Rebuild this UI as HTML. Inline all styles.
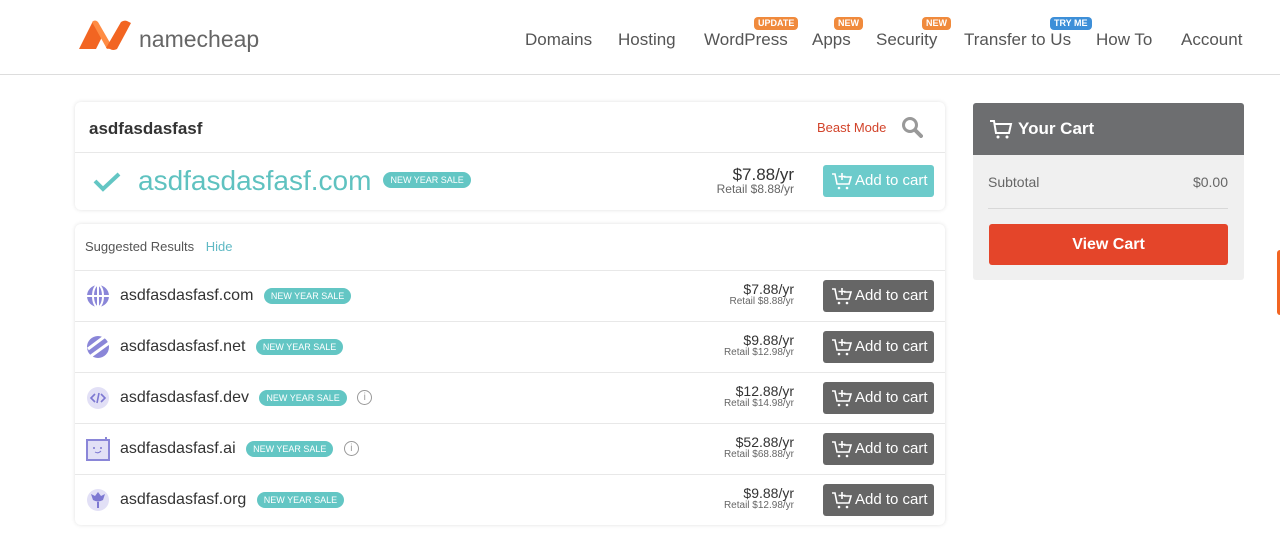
<!DOCTYPE html>
<html><head><meta charset="utf-8"><style>
*{margin:0;padding:0;box-sizing:border-box}
body{width:1280px;height:536px;background:#fff;font-family:"Liberation Sans",sans-serif;position:relative;overflow:hidden;color:#333}
.a{position:absolute}
.nav{font-size:17px;color:#555;top:30px;white-space:nowrap}
.nb{position:absolute;top:-13px;font-size:9px;color:#fff;background:#f08a3c;border-radius:4px;padding:1px 4px;font-weight:bold;line-height:11px;white-space:nowrap}
.box{background:#fff;border-radius:6px;box-shadow:0 0 4px rgba(0,0,0,.12)}
.badge{display:inline-block;background:#63c6c4;color:#fff;font-size:9px;border-radius:9px;padding:3px 7px;vertical-align:middle;line-height:10px;margin-left:6px}
.row{position:absolute;left:0;width:870px;height:51px;border-top:1px solid #e8e8e8}
.dn{position:absolute;left:45px;top:16px;font-size:16px;color:#333;white-space:nowrap}
.pr{position:absolute;right:151px;top:11px;text-align:right;font-size:14px;color:#333;line-height:14px}
.pr small{display:block;font-size:10px;color:#666;line-height:11px}
.btn{position:absolute;left:748px;top:9px;width:111px;height:32px;background:#666;color:#fff;border-radius:3px;font-size:15px;line-height:32px;padding-left:32px}
.cart{position:absolute;left:8px;top:7px}
.ic{position:absolute;left:11px;top:13px;width:24px;height:24px}
</style></head><body>
<svg class="a" style="left:75px;top:19px" width="58" height="32" viewBox="0 0 58 32"><path d="M4 30 L17 4 Q19 1 22 4 L28 16 L21 30 Z" fill="#f26522"/><path d="M17 3 Q20 0 23 3 L38 29 L32 30 Z" fill="#ff8c44"/><path d="M31 29 L46 3 Q49 1 52 2 L56 4 L42 30 Q38 32 35 30Z" fill="#f26522"/></svg>
<div class="a" style="left:139px;top:26px;font-size:23px;color:#666">namecheap</div>
<div class="a nav" style="left:525px">Domains</div>
<div class="a nav" style="left:618px">Hosting</div>
<div class="a nav" style="left:704px">WordPress<span class="nb" style="left:50px">UPDATE</span></div>
<div class="a nav" style="left:812px">Apps<span class="nb" style="left:22px">NEW</span></div>
<div class="a nav" style="left:876px">Security<span class="nb" style="left:46px">NEW</span></div>
<div class="a nav" style="left:964px">Transfer to Us<span class="nb" style="left:86px;background:#3d8fd8">TRY ME</span></div>
<div class="a nav" style="left:1096px">How To</div>
<div class="a nav" style="left:1181px">Account</div>
<div class="a" style="left:0;top:74px;width:1280px;height:1px;background:#ddd"></div>

<div class="a box" style="left:75px;top:102px;width:870px;height:108px">
 <div class="a" style="left:14px;top:17px;font-size:17px;font-weight:bold;color:#333">asdfasdasfasf</div>
 <div class="a" style="left:742px;top:18px;font-size:13px;color:#d2432a">Beast Mode</div>
 <svg class="a" style="left:826px;top:14px" width="22" height="22" viewBox="0 0 22 22"><circle cx="9" cy="9" r="6.5" stroke="#999" stroke-width="3" fill="none"/><path d="M14 14 L20 20" stroke="#999" stroke-width="4" stroke-linecap="round"/></svg>
 <div class="a" style="left:0;top:50px;width:870px;height:1px;background:#e8e8e8"></div>
 <svg class="a" style="left:18px;top:70px" width="28" height="20" viewBox="0 0 28 20"><path d="M2 9 L10 17 L26 2" stroke="#63c6c4" stroke-width="4" fill="none"/></svg>
 <div class="a" style="left:63px;top:63px;font-size:28px;color:#5fc2c0;white-space:nowrap">asdfasdasfasf.com<span class="badge" style="position:relative;top:-3px;margin-left:12px">NEW YEAR SALE</span></div>
 <div class="pr" style="top:64px;right:151px;font-size:17px;line-height:17px">$7.88/yr<small style="font-size:12px;line-height:13px">Retail $8.88/yr</small></div>
 <div class="btn" style="top:63px;background:#6ccbcb">Add to cart<svg class="cart" width="22" height="18" viewBox="0 0 22 18"><path d="M1 2 H4 L6 12 H18 L20 5 H13" stroke="#fff" stroke-width="1.6" fill="none"/><path d="M11 1 V8 M7.5 4.5 H14.5" stroke="#fff" stroke-width="1.6"/><circle cx="8" cy="16" r="1.3" fill="#fff"/><circle cx="16" cy="16" r="1.3" fill="#fff"/></svg></div>
</div>

<div class="a box" style="left:75px;top:224px;width:870px;height:301px">
 <div class="a" style="left:10px;top:15px;font-size:13px;color:#555">Suggested Results <span style="color:#5fb9c4;margin-left:8px">Hide</span></div>
 <div class="row" style="top:46px"><svg class="ic" viewBox="0 0 24 24"><circle cx="12" cy="12" r="11" fill="#8a86d8"/><path d="M12 1 V23 M1 12 H23" stroke="#fff" stroke-width="2"/><ellipse cx="12" cy="12" rx="5" ry="11" stroke="#fff" stroke-width="2" fill="none"/></svg><div class="dn">asdfasdasfasf.com <span class="badge">NEW YEAR SALE</span></div><div class="pr">$7.88/yr<small>Retail $8.88/yr</small></div><div class="btn">Add to cart<svg class="cart" width="22" height="18" viewBox="0 0 22 18"><path d="M1 2 H4 L6 12 H18 L20 5 H13" stroke="#fff" stroke-width="1.6" fill="none"/><path d="M11 1 V8 M7.5 4.5 H14.5" stroke="#fff" stroke-width="1.6"/><circle cx="8" cy="16" r="1.3" fill="#fff"/><circle cx="16" cy="16" r="1.3" fill="#fff"/></svg></div></div>
 <div class="row" style="top:97px"><svg class="ic" viewBox="0 0 24 24"><circle cx="12" cy="12" r="11" fill="#8a86d8"/><path d="M2 14 L18 2 M5 21 L23 8" stroke="#fff" stroke-width="3"/></svg><div class="dn">asdfasdasfasf.net <span class="badge">NEW YEAR SALE</span></div><div class="pr">$9.88/yr<small>Retail $12.98/yr</small></div><div class="btn">Add to cart<svg class="cart" width="22" height="18" viewBox="0 0 22 18"><path d="M1 2 H4 L6 12 H18 L20 5 H13" stroke="#fff" stroke-width="1.6" fill="none"/><path d="M11 1 V8 M7.5 4.5 H14.5" stroke="#fff" stroke-width="1.6"/><circle cx="8" cy="16" r="1.3" fill="#fff"/><circle cx="16" cy="16" r="1.3" fill="#fff"/></svg></div></div>
 <div class="row" style="top:148px"><svg class="ic" viewBox="0 0 24 24"><circle cx="12" cy="12" r="11" fill="#e2e0f6"/><path d="M9 8 L5 12 L9 16 M15 8 L19 12 L15 16 M13 7 L11 17" stroke="#7d78d2" stroke-width="1.6" fill="none"/></svg><div class="dn">asdfasdasfasf.dev <span class="badge">NEW YEAR SALE</span> <span style="display:inline-block;width:15px;height:15px;border:1px solid #999;border-radius:50%;font-size:10px;text-align:center;line-height:13px;color:#999;margin-left:6px;vertical-align:middle">i</span></div><div class="pr">$12.88/yr<small>Retail $14.98/yr</small></div><div class="btn">Add to cart<svg class="cart" width="22" height="18" viewBox="0 0 22 18"><path d="M1 2 H4 L6 12 H18 L20 5 H13" stroke="#fff" stroke-width="1.6" fill="none"/><path d="M11 1 V8 M7.5 4.5 H14.5" stroke="#fff" stroke-width="1.6"/><circle cx="8" cy="16" r="1.3" fill="#fff"/><circle cx="16" cy="16" r="1.3" fill="#fff"/></svg></div></div>
 <div class="row" style="top:199px"><svg class="ic" viewBox="0 0 24 24"><rect x="1" y="3" width="22" height="20" fill="#e2e0f6" stroke="#8a86d8" stroke-width="2"/><path d="M20 0 V3" stroke="#8a86d8" stroke-width="2"/><circle cx="8" cy="11" r="1" fill="#7d78d2"/><circle cx="15" cy="11" r="1" fill="#7d78d2"/><path d="M9 15 Q12 17 15 14" stroke="#7d78d2" fill="none"/></svg><div class="dn">asdfasdasfasf.ai <span class="badge">NEW YEAR SALE</span> <span style="display:inline-block;width:15px;height:15px;border:1px solid #999;border-radius:50%;font-size:10px;text-align:center;line-height:13px;color:#999;margin-left:6px;vertical-align:middle">i</span></div><div class="pr">$52.88/yr<small>Retail $68.88/yr</small></div><div class="btn">Add to cart<svg class="cart" width="22" height="18" viewBox="0 0 22 18"><path d="M1 2 H4 L6 12 H18 L20 5 H13" stroke="#fff" stroke-width="1.6" fill="none"/><path d="M11 1 V8 M7.5 4.5 H14.5" stroke="#fff" stroke-width="1.6"/><circle cx="8" cy="16" r="1.3" fill="#fff"/><circle cx="16" cy="16" r="1.3" fill="#fff"/></svg></div></div>
 <div class="row" style="top:250px"><svg class="ic" viewBox="0 0 24 24"><circle cx="12" cy="12" r="11" fill="#e2e0f6"/><path d="M12 4 L9 8 L5 6 L7 12 Q12 15 17 12 L19 6 L15 8Z M11 13 H13 V20 H11Z" fill="#7d78d2"/></svg><div class="dn">asdfasdasfasf.org <span class="badge">NEW YEAR SALE</span></div><div class="pr">$9.88/yr<small>Retail $12.98/yr</small></div><div class="btn">Add to cart<svg class="cart" width="22" height="18" viewBox="0 0 22 18"><path d="M1 2 H4 L6 12 H18 L20 5 H13" stroke="#fff" stroke-width="1.6" fill="none"/><path d="M11 1 V8 M7.5 4.5 H14.5" stroke="#fff" stroke-width="1.6"/><circle cx="8" cy="16" r="1.3" fill="#fff"/><circle cx="16" cy="16" r="1.3" fill="#fff"/></svg></div></div>
</div>

<div class="a" style="left:973px;top:103px;width:271px;height:177px;background:#f0f0f0;border-radius:3px;overflow:hidden">
 <div style="height:52px;background:#6d6e70;color:#fff;font-size:17px;font-weight:bold;padding:16px 0 0 45px;position:relative">Your Cart<svg style="position:absolute;left:16px;top:16px" width="24" height="20" viewBox="0 0 24 20"><path d="M1 2 H5 L7 14 H20 L22 5 H6" stroke="#fff" stroke-width="2" fill="none"/><circle cx="9" cy="18" r="1.5" fill="#fff"/><circle cx="18" cy="18" r="1.5" fill="#fff"/></svg></div>
 <div class="a" style="left:15px;top:71px;font-size:14px;color:#666">Subtotal</div>
 <div class="a" style="right:16px;top:71px;font-size:14px;color:#666">$0.00</div>
 <div class="a" style="left:15px;top:105px;width:240px;height:1px;background:#d8d8d8"></div>
 <div class="a" style="left:16px;top:121px;width:239px;height:41px;background:#e4452a;border-radius:3px;color:#fff;font-weight:bold;font-size:16px;text-align:center;line-height:41px">View Cart</div>
</div>
<div class="a" style="left:1277px;top:250px;width:3px;height:65px;background:#f26522;border-radius:3px 0 0 3px"></div>
</body></html>
